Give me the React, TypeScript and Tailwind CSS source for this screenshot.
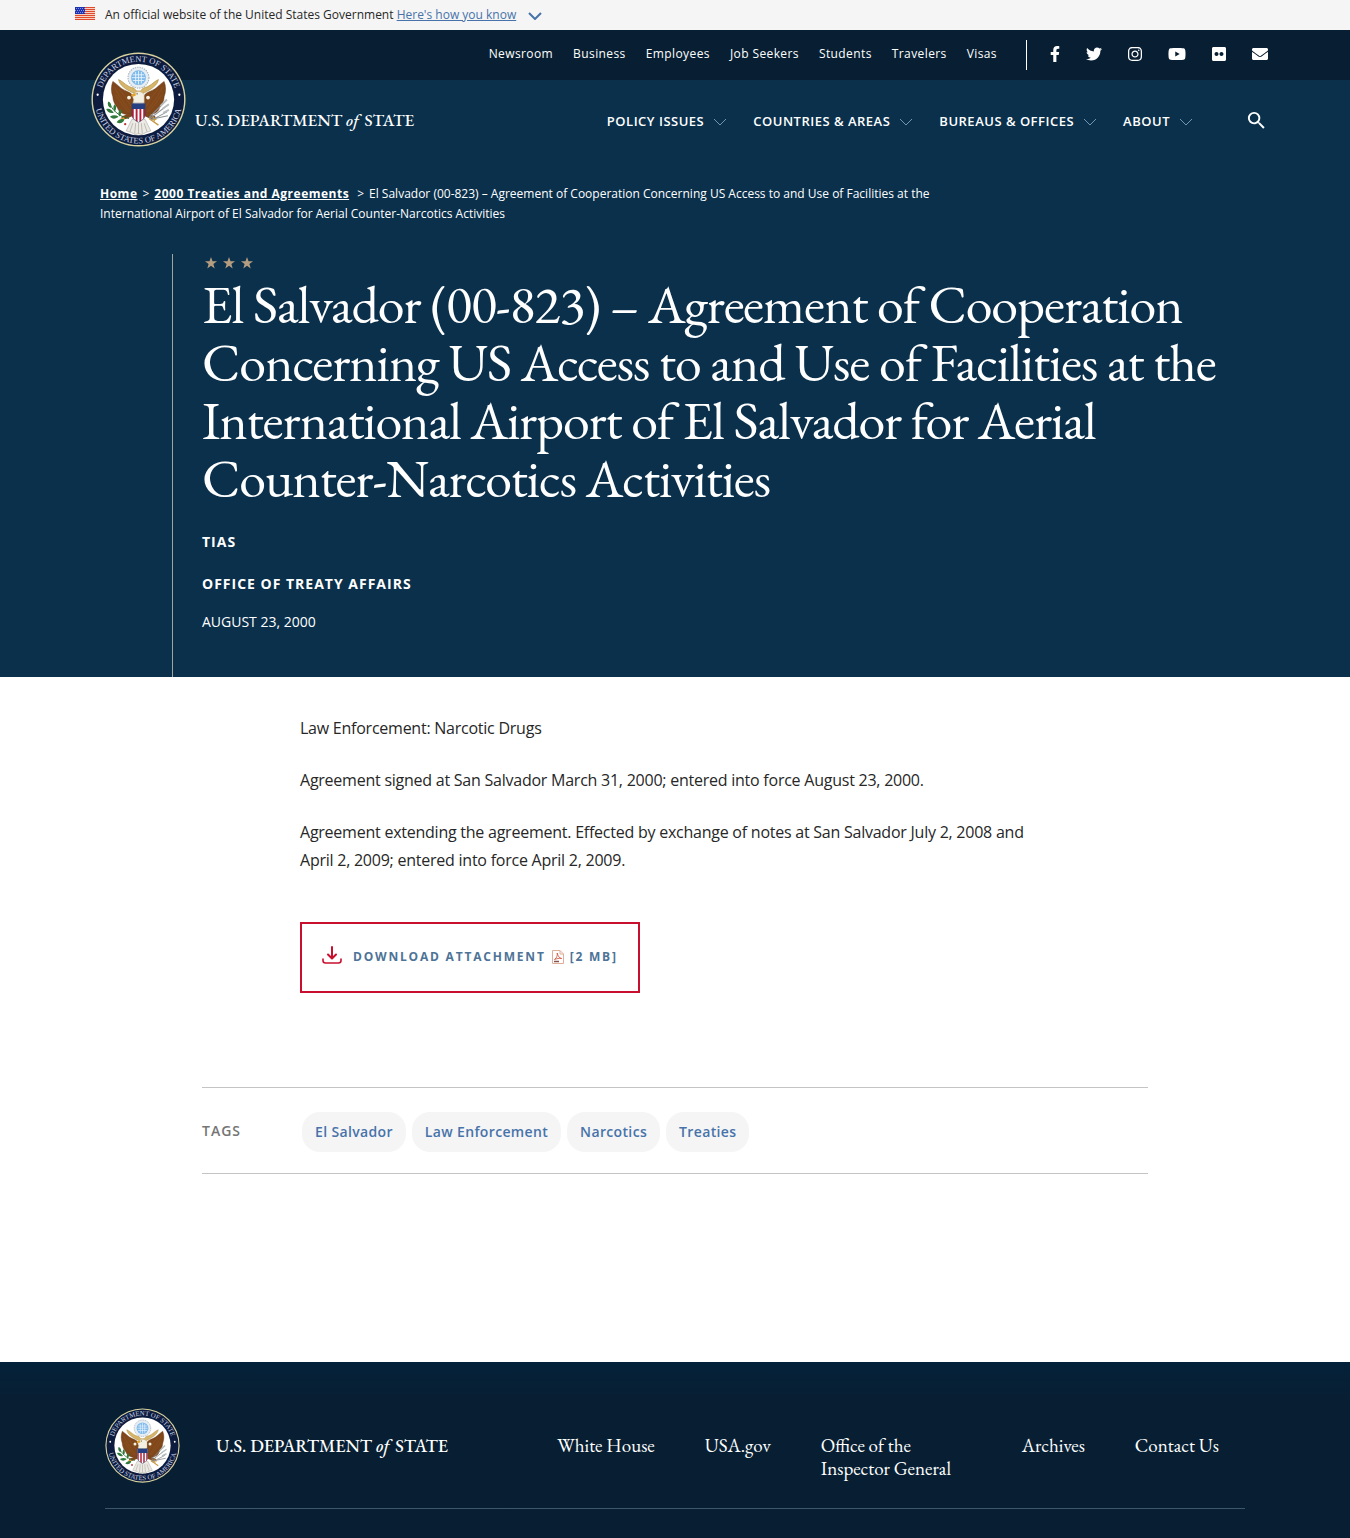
import React from "react";
import {
  FaFacebookF,
  FaTwitter,
  FaInstagram,
  FaYoutube,
  FaFlickr,
  FaEnvelope,
} from "react-icons/fa";
import { MdSearch } from "react-icons/md";

function FlagIcon() {
  return (
    <svg viewBox="0 0 20 13" className="h-[13px] w-5 shrink-0" role="img" aria-label="U.S. flag">
      <rect width="20" height="13" fill="#f6cfc0" />
      {[0, 2, 4, 6, 8, 10, 12].map((y) => (
        <rect key={y} y={y} width="20" height="1" fill="#e0492a" />
      ))}
      <rect width="10" height="7" fill="#1e33b1" />
      {[1, 3, 5].map((y) =>
        [1, 3, 5, 7, 9].map((x) => (
          <rect key={`${x}-${y}`} x={x - (y === 3 ? 1 : 0)} y={y} width="1" height="1" fill="#8490e0" />
        ))
      )}
    </svg>
  );
}

function Chevron({ className }: { className: string }) {
  return (
    <svg viewBox="0 0 14 8" fill="none" stroke="currentColor" className={className} aria-hidden="true">
      <path d="M1 1l6 6 6-6" />
    </svg>
  );
}

function Seal({ id, className }: { id: string; className: string }) {
  return (
    <svg viewBox="0 0 100 100" className={className} role="img" aria-label="Seal of the Department of State">
      <defs>
        <path id={`${id}-top`} d="M10.200 56a40.200 40.200 0 1 1 79.600 0" />
        <path id={`${id}-bottom`} d="M4.200 46a46 46 0 1 0 91.600 0" />
        <clipPath id={`${id}-shield`}>
          <path d="M43 54h14v12c0 4-3.500 6-7 8-3.500-2-7-4-7-8z" />
        </clipPath>
      </defs>
      <circle cx="50" cy="50" r="49.500" fill="#d9d3a0" />
      <circle cx="50" cy="50" r="48" fill="#0d1c3e" />
      <circle cx="50" cy="50" r="37.500" fill="#fff" />
      <g fill="#c9d2e6" fontFamily="'Liberation Serif', serif" fontSize="9" fontWeight="400">
        <text textAnchor="middle">
          <textPath href={`#${id}-top`} startOffset="50%">
            DEPARTMENT OF STATE
          </textPath>
        </text>
        <text textAnchor="middle">
          <textPath href={`#${id}-bottom`} startOffset="50%">
            UNITED STATES OF AMERICA
          </textPath>
        </text>
      </g>
      <circle cx="7" cy="45" r="1.200" fill="#fff" />
      <circle cx="93" cy="45" r="1.200" fill="#fff" />

      {/* glory of stars above the eagle */}
      <circle cx="50" cy="27" r="11" fill="#e6edf3" stroke="#a9b4bd" strokeWidth="1.200" strokeDasharray="1.500 1" />
      <circle cx="50" cy="27" r="7.800" fill="#7db9ea" />
      <g stroke="#eaf5ff" strokeWidth="0.900">
        <path d="M44 24h12M43 27h14M44 30h12M47 21v12M50 20v14M53 21v12" />
      </g>

      {/* scroll */}
      <path
        d="M29 29c5 2 9 8 16 9l3 3h4l3-3c7-1 11-7 16-9-1 6-7 10-15 14l-5 2h-2l-5-2c-8-4-14-8-15-14z"
        fill="#d8b669"
        stroke="#a58338"
        strokeWidth="0.600"
      />

      {/* wings */}
      <g fill="#80471b" stroke="#5d2f0d" strokeWidth="0.500">
        <path d="M23 31c5 3 8 8 14 10 5 2 8 4 8 9v14l-7 2c-5-1-9-3-10-7-3-4-5-8-5-12-2-5-2-11 0-16z" />
        <path d="M77 31c-5 3-8 8-14 10-5 2-8 4-8 9v14l7 2c5-1 9-3 10-7 3-4 5-8 5-12 2-5 2-11 0-16z" />
      </g>
      <g stroke="#955a26" strokeWidth="0.500" fill="none">
        <path d="M25 37c3 8 9 15 16 26M26 45c4 7 8 12 13 18M29 39c5 5 9 11 13 18M75 37c-3 8-9 15-16 26M74 45c-4 7-8 12-13 18M71 39c-5 5-9 11-13 18" />
      </g>

      {/* head and neck */}
      <path d="M45 50c-2-3-1-7 3-8 3-1 6 0 8 3v9H44z" fill="#f3efe2" stroke="#b9ab88" strokeWidth="0.500" />
      <path d="M47 43l-5 2 1 2 4-1z" fill="#dfa52e" />
      <circle cx="48.500" cy="44" r="0.700" fill="#3b2a12" />
      <circle cx="40" cy="48" r="2" fill="#f6f1e3" />
      <circle cx="60" cy="48" r="2" fill="#f6f1e3" />

      {/* tail and legs */}
      <path d="M43 71l-6 12 6 2 3 2 4-1 4 1 3-2 6-2-6-12z" fill="#eceae5" stroke="#a9a39a" strokeWidth="0.600" />
      <path d="M44 75l-3 9M47 75l-1 11M50 75v11M53 75l1 11M56 75l3 9" stroke="#a9a39a" strokeWidth="0.700" />
      <path d="M42 66c-3 1-5 3-8 3M58 66c3 1 5 3 8 3" stroke="#80471b" strokeWidth="4" strokeLinecap="round" />
      <path d="M35 69l-4 2M35 69l-2 4M65 69l4 2M65 69l2 4" stroke="#d7a138" strokeWidth="1.500" />

      {/* olive branch */}
      <path d="M19 53c3 7 8 14 21 17" stroke="#2e6b34" strokeWidth="1" fill="none" />
      <g fill="#2f7a3b">
        <path d="M18 52c3 1 4 4 3 7-3-1-4-4-3-7zM16 60c4-1 6 1 8 4-4 1-7-1-8-4zM25 55c2 2 2 5 0 8-2-3-2-6 0-8zM20 68c3-2 6-2 9 0-3 3-7 3-9 0zM31 60c2 3 1 5-1 8-2-3-1-6 1-8zM27 74c2-3 5-4 8-3-1 4-5 5-8 3z" />
      </g>
      <circle cx="36" cy="76" r="1.200" fill="#bb3030" />

      {/* arrows */}
      <g stroke="#8d9296" strokeWidth="1.100">
        <path d="M62 70l16-12M63 72l17-9M61 69l15-15M62 71l19-4" />
      </g>
      <path d="M73 57l7-7M75 60l7-5M76 64l6-3" stroke="#b6bcc0" strokeWidth="2" />
      <path d="M61 70l10 7" stroke="#c59a45" strokeWidth="1.400" />

      {/* shield */}
      <g clipPath={`url(#${id}-shield)`}>
        <rect x="43" y="54" width="14" height="21" fill="#fff" />
        {[43, 47, 51, 55].map((x) => (
          <rect key={x} x={x} y="59" width="2" height="16" fill="#b3203a" />
        ))}
        <rect x="43" y="54" width="14" height="6" fill="#263f83" />
      </g>
      <path d="M43 54h14v12c0 4-3.500 6-7 8-3.500-2-7-4-7-8z" fill="none" stroke="#33406d" strokeWidth="0.600" />
    </svg>
  );
}

function Wordmark({ className }: { className: string }) {
  return (
    <span className={`whitespace-nowrap font-['EB_Garamond','Liberation_Serif',serif] ${className}`}>
      U.S. DEPARTMENT <em className="mr-[2px]">of</em> STATE
    </span>
  );
}

function Star() {
  return (
    <svg viewBox="0 0 12 12" className="size-3" fill="#b59d80" aria-hidden="true">
      <path d="M6 0l1.500 4.300H12L8.400 7l1.300 4.500L6 8.800l-3.700 2.700L3.600 7 0 4.300h4.500z" />
    </svg>
  );
}

function DownloadIcon() {
  return (
    <svg
      viewBox="0 0 20 18"
      fill="none"
      stroke="#c8102e"
      strokeWidth="2"
      strokeLinecap="round"
      strokeLinejoin="round"
      className="mb-1 h-[18px] w-5 shrink-0"
      aria-hidden="true"
    >
      <path d="M10 1v11M6 8.500l4 4 4-4" />
      <path d="M1 13v1.500C1 16 2 17 3.500 17h13c1.500 0 2.500-1 2.500-2.500V13" strokeWidth="1.600" />
    </svg>
  );
}

function PdfIcon() {
  return (
    <svg viewBox="0 0 12 14" fill="none" className="h-[14px] w-3 shrink-0" role="img" aria-label="PDF">
      <path d="M.5.5h7.500l3.500 3.500v9.500H.5z" fill="#fff" stroke="#dfae98" />
      <path d="M8 .5V4h3.500" stroke="#dfae98" />
      <path d="M2.500 9.500C5 8 5.500 5 5.200 3c1 3.500 2 5 4.500 5.500-2.500-.5-5 .2-7.200 1z" stroke="#cf4b38" strokeWidth="0.800" />
      <path d="M2 11.500h5" stroke="#84514c" strokeWidth="1.500" />
    </svg>
  );
}

const topLinks = ["Newsroom", "Business", "Employees", "Job Seekers", "Students", "Travelers", "Visas"];
const mainLinks = ["Policy Issues", "Countries & Areas", "Bureaus & Offices", "About"];
const tags = ["El Salvador", "Law Enforcement", "Narcotics", "Treaties"];
const socials = [
  { label: "Facebook", Icon: FaFacebookF, size: "h-4 w-[10px]" },
  { label: "Twitter", Icon: FaTwitter, size: "h-4 w-4" },
  { label: "Instagram", Icon: FaInstagram, size: "h-4 w-[14px]" },
  { label: "YouTube", Icon: FaYoutube, size: "h-4 w-[18px]" },
  { label: "Flickr", Icon: FaFlickr, size: "h-4 w-[14px]" },
  { label: "Email", Icon: FaEnvelope, size: "h-4 w-4" },
];

export default function App() {
  return (
    <div className="flex min-h-screen flex-col bg-white font-['Open_Sans',sans-serif] text-[#272727]">
      <div className="bg-[#f5f5f5]">
        <div className="mx-auto flex h-[30px] max-w-[1200px] items-center text-xs">
          <div className="mb-1 mr-[10px]">
            <FlagIcon />
          </div>
          <p>
            An official website of the United States Government{" "}
            <button type="button" className="text-[#4773aa] underline">
              Here's how you know
            </button>
          </p>
          <Chevron className="ml-3 mt-[2px] h-2 w-[14px] stroke-2 text-[#4773aa]" />
        </div>
      </div>

      <header className="bg-[#0a304c] text-white">
        <div className="bg-[#081f33]">
          <div className="mx-auto flex h-[50px] max-w-[1200px] items-center justify-end pr-[7px]">
            <nav aria-label="Utility" className="flex gap-5 pb-[2px] pr-[29px] text-xs tracking-[0.4px]">
              {topLinks.map((t) => (
                <a key={t} href="#" className="whitespace-nowrap">
                  {t}
                </a>
              ))}
            </nav>
            <div className="flex h-[30px] items-center gap-[26px] border-l border-white pb-[2px] pl-[23px]">
              {socials.map(({ label, Icon, size }) => (
                <a key={label} href="#" aria-label={label}>
                  <Icon className={size} />
                </a>
              ))}
            </div>
          </div>
        </div>

        <div className="mx-auto flex h-[84px] max-w-[1200px] items-center justify-between pl-4 pr-[7px]">
          <a href="#" className="flex items-center gap-[9px]">
            <Seal id="header-seal" className="-mt-[46px] size-[95px]" />
            <Wordmark className="pb-[3px] text-[17px] font-medium" />
          </a>
          <div className="flex items-center">
            <nav aria-label="Main" className="flex gap-[26px]">
              {mainLinks.map((t) => (
                <button
                  key={t}
                  type="button"
                  className="flex items-center gap-[9px] whitespace-nowrap text-[13px] font-semibold uppercase tracking-[0.5px]"
                >
                  {t}
                  <Chevron className="h-2 w-[14px] text-[#6f97b5]" />
                </button>
              ))}
            </nav>
            <button type="button" aria-label="Search" className="ml-[52px] pb-1">
              <MdSearch className="size-[23px]" />
            </button>
          </div>
        </div>
      </header>

      <section className="bg-[#0a304c] text-white">
        <div className="mx-auto max-w-[1150px] pt-5">
          <nav aria-label="Breadcrumb" className="max-w-[850px] text-xs leading-5">
            <a href="#" className="font-bold tracking-[0.5px] underline">
              Home
            </a>
            <span className="mx-[5px]">&gt;</span>
            <a href="#" className="font-bold tracking-[0.5px] underline">
              2000 Treaties and Agreements
            </a>
            <span className="ml-2 mr-[5px]">&gt;</span>
            <span>
              El Salvador (00-823) – Agreement of Cooperation Concerning US Access to and Use of Facilities at the
              International Airport of El Salvador for Aerial Counter-Narcotics Activities
            </span>
          </nav>
          <div className="ml-[72px] mt-[30px] border-l border-[#a3a59c] pb-[45px] pl-[29px]">
            <div className="flex gap-[6px] pl-[3px] pt-[3px]">
              <Star />
              <Star />
              <Star />
            </div>
            <h1 className="mt-[6px] font-['EB_Garamond','Liberation_Serif',serif] text-[54px] leading-[58px] tracking-[-0.02em]">
              El Salvador (00-823) – Agreement of Cooperation Concerning US Access to and Use of Facilities at the
              International Airport of El Salvador for Aerial Counter-Narcotics Activities
            </h1>
            <p className="mt-[25px] text-sm font-bold uppercase tracking-[1px]">TIAS</p>
            <p className="mt-[22px] text-sm font-bold uppercase tracking-[1px]">Office of Treaty Affairs</p>
            <p className="mt-[18px] text-sm uppercase">August 23, 2000</p>
          </div>
        </div>
      </section>

      <main className="grow pb-[188px]">
        <div className="mx-auto max-w-[750px] pt-[37px]">
          <div className="space-y-6 text-base leading-7 tracking-[-0.015em]">
            <p>Law Enforcement: Narcotic Drugs</p>
            <p>Agreement signed at San Salvador March 31, 2000; entered into force August 23, 2000.</p>
            <p>
              Agreement extending the agreement. Effected by exchange of notes at San Salvador July 2, 2008 and April 2,
              2009; entered into force April 2, 2009.
            </p>
          </div>
          <a
            href="#"
            className="mt-12 inline-flex h-[71px] items-center border-2 border-[#c8102e] px-5 pb-[2px] text-xs font-bold uppercase tracking-[0.15em] text-[#4d7397]"
          >
            <DownloadIcon />
            <span className="ml-[11px]">Download Attachment</span>
            <span className="ml-[6px] flex items-center gap-[6px]">
              <PdfIcon />
              [2 MB]
            </span>
          </a>
        </div>
        <div className="mx-auto mt-[94px] flex max-w-[946px] items-center border-y border-[#c4c4c4] pb-[21px] pt-6">
          <h2 className="w-[100px] pb-[2px] text-sm font-semibold uppercase tracking-[1px] text-[#757575]">Tags</h2>
          <ul className="flex gap-[6px]">
            {tags.map((t) => (
              <li key={t}>
                <a
                  href="#"
                  className="flex h-10 items-center whitespace-nowrap rounded-[18px] bg-[#f5f5f5] px-[13px] text-sm font-semibold tracking-wide text-[#4773aa]"
                >
                  {t}
                </a>
              </li>
            ))}
          </ul>
        </div>
      </main>

      <footer className="bg-linear-to-b from-[#03213a] from-0% to-[#081f33] to-20% pb-[29px] font-['EB_Garamond','Liberation_Serif',serif] text-white">
        <div className="mx-auto flex max-w-[1140px] border-b border-[#3c576b] pb-[25px] pt-[46px]">
          <Seal id="footer-seal" className="size-[75px]" />
          <Wordmark className="ml-9 mt-6 text-[18px] leading-7 font-medium" />
          <nav aria-label="Footer" className="ml-auto mr-[26px] mt-[26px] flex gap-[50px] text-[19px] leading-[23px]">
            <a href="#">White House</a>
            <a href="#">USA.gov</a>
            <a href="#" className="w-[151px]">
              Office of the Inspector General
            </a>
            <a href="#">Archives</a>
            <a href="#">Contact Us</a>
          </nav>
        </div>
      </footer>
    </div>
  );
}
